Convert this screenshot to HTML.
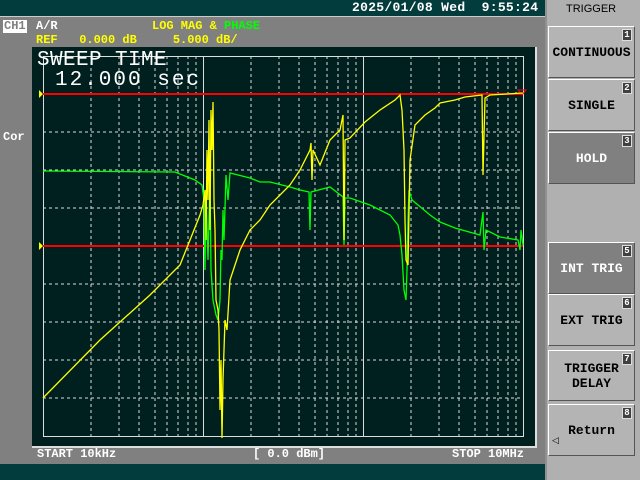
<!DOCTYPE html>
<html><head><meta charset="utf-8"><style>
body{margin:0;width:640px;height:480px;background:#033c3c;overflow:hidden;position:relative;font-family:"Liberation Mono",monospace;font-weight:bold}
.t{position:absolute;white-space:pre;font-size:13px;line-height:13px}
.btn{position:absolute;left:548px;width:87px;height:50px;background:#b4b4b4;border:1px solid #fff;border-right-color:#555;border-bottom-color:#555;box-sizing:border-box;color:#000;font-family:"Liberation Mono",monospace;font-weight:bold;font-size:13px;text-align:center;display:flex;align-items:center;justify-content:center;line-height:15px}
.dk{background:#808080;color:#fff}
.n{position:absolute;right:2px;top:2px;width:8px;height:10px;background:#404040;color:#fff;font-size:9px;line-height:10px;border:1px solid #ddd;font-family:"Liberation Mono",monospace}
</style></head><body>
<div class="t" style="left:352px;top:1px;color:#fff;font-size:13px;letter-spacing:0.3px">2025/01/08 Wed  9:55:24</div>
<div style="position:absolute;left:0;top:16px;width:545px;height:447px;background:#808080;border-top:1px solid #ccc;border-right:1px solid #ccc"></div>
<div style="position:absolute;left:545px;top:0;width:95px;height:480px;background:#b0b0b0;border-left:2px solid #909090"></div>
<div class="t" style="left:566px;top:3px;color:#000;font-weight:normal;font-family:'Liberation Sans',sans-serif;font-size:11px">TRIGGER</div>
<div class="t" style="left:3px;top:20px;background:#fff;color:#808080;padding:0 1px;font-size:12px">CH1</div>
<div class="t" style="left:36px;top:20px;color:#fff;font-size:12px">A/R</div>
<div class="t" style="left:152px;top:20px;color:#ff0;font-size:12px">LOG MAG &amp; <span style="color:#0f0">PHASE</span></div>
<div class="t" style="left:36px;top:34px;color:#ff0;font-size:12px">REF   0.000 dB     5.000 dB/</div>
<div class="t" style="left:3px;top:131px;color:#fff;font-size:12px">Cor</div>
<div style="position:absolute;left:32px;top:47px;width:503px;height:399px;background:#002020;border-right:2px solid #ddd;border-bottom:2px solid #ddd"></div>
<svg style="position:absolute;left:0;top:0" width="640" height="480">
<g stroke="#ddd" stroke-width="1" stroke-dasharray="3,3" fill="none">
<path d="M43 132H523M43 170H523M43 208H523M43 284H523M43 322H523M43 360H523M43 398H523"/>
<path d="M91 56V437M119 56V437M139 56V437M155 56V437M167 56V437M178 56V437M188 56V437M196 56V437M251 56V437M279 56V437M299 56V437M315 56V437M327 56V437M338 56V437M348 56V437M356 56V437M411 56V437M439 56V437M459 56V437M475 56V437M487 56V437M498 56V437M508 56V437M516 56V437"/>
</g>
<g stroke="#ddd" fill="none"><path d="M43.5 56V437M203.5 56V437M363.5 56V437M523.5 56V437M43 56.5H523M43 436.5H523"/></g>
<path d="M43 94H523M43 246H523" stroke="#f00" stroke-width="2"/>
<path d="M39 90l4 4-4 4zM39 242l4 4-4 4z" fill="#ff0"/>
<path d="M518 90h8l-4 5z" fill="none" stroke="#f00"/>
<polyline fill="none" stroke="#0f0" stroke-width="1.3" points="43,171 175,172 195,180 202,185 204,200 205,270 206,190 208,260 210,180 211,270 213,300 215,310 216,315 218,320 220,300 221,250 222,260 223,210 224,240 226,175 228,200 230,173 250,178 260,182 270,182 290,187 300,190 309,192 310,230 311,192 330,187 343,197 344,245 345,198 350,198 370,205 390,215 398,225 400,235 402,255 404,290 406,300 407,270 408,220 409,190 412,200 418,205 430,215 440,222 455,228 480,235 483,212 484,250 486,230 500,237 518,240 520,250 521,230 523,245"/>
<polyline fill="none" stroke="#ff0" stroke-width="1.3" points="43,398 100,340 150,295 180,265 190,240 200,215 203,205 205,190 206,240 207,150 208,200 209,120 210,230 211,110 212,150 213,102 214,200 215,230 216,300 218,310 219,330 220,410 221,360 222,438 223,380 224,350 225,320 227,330 230,280 235,265 240,250 250,230 260,220 270,205 290,185 300,170 310,150 311,143 312,180 313,150 320,165 330,140 340,130 343,115 344,240 345,140 350,138 365,122 380,110 395,100 400,95 402,110 404,150 405,220 406,260 408,265 410,160 415,125 425,115 435,108 440,103 455,100 465,97 482,95 483,175 485,98 490,95 523,93"/>
</svg>
<div class="t" style="left:37px;top:50px;color:#fff;font-size:21px;line-height:21px;font-weight:normal;letter-spacing:0.4px">SWEEP TIME</div>
<div class="t" style="left:55px;top:70px;color:#fff;font-size:21px;line-height:21px;font-weight:normal;letter-spacing:2px">12.000 sec</div>
<div class="t" style="left:37px;top:448px;color:#fff;font-size:12px">START 10kHz</div>
<div class="t" style="left:253px;top:448px;color:#fff;font-size:12px">[ 0.0 dBm]</div>
<div class="t" style="left:452px;top:448px;color:#fff;font-size:12px">STOP 10MHz</div>
<div class="btn" style="top:26px;height:52px">CONTINUOUS<span class="n">1</span></div>
<div class="btn" style="top:79px;height:52px">SINGLE<span class="n">2</span></div>
<div class="btn dk" style="top:132px;height:52px">HOLD<span class="n">3</span></div>
<div class="btn dk" style="top:242px;height:52px">INT TRIG<span class="n">5</span></div>
<div class="btn" style="top:294px;height:52px">EXT TRIG<span class="n">6</span></div>
<div class="btn" style="top:350px;height:51px">TRIGGER<br>DELAY<span class="n">7</span></div>
<div class="btn" style="top:404px;height:52px">Return<span class="n">8</span><span style="position:absolute;left:3px;bottom:6px;font-size:9px;font-weight:normal">◁</span></div>
</body></html>
